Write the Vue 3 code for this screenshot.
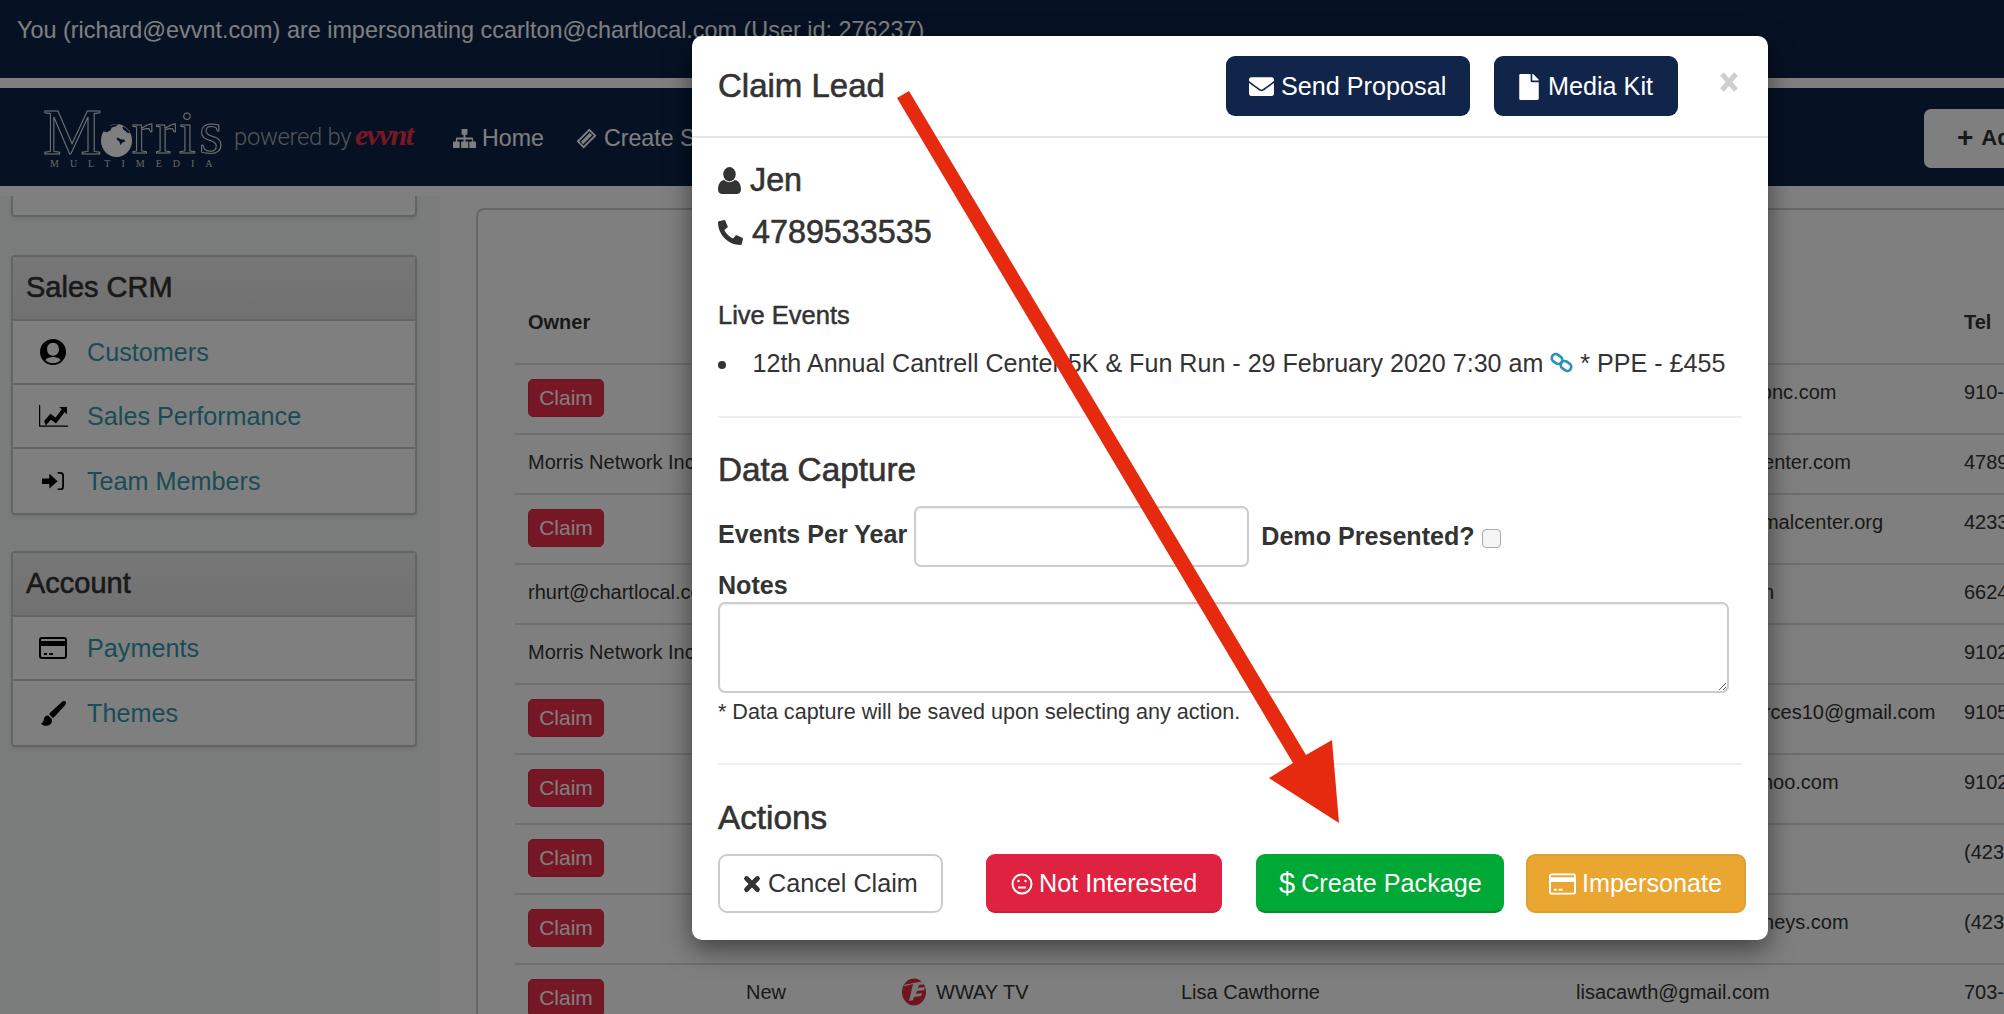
<template>
	<div class="page">
		<div class="impersonate-bar">You (richard@evvnt.com) are impersonating ccarlton@chartlocal.com (User id: 276237)</div>

		<nav class="nav">
			<div class="logo">
				<div class="logo-word">
					<span class="logo-m">M</span>
					<svg class="globe" viewBox="0 0 32 34">
						<ellipse cx="16" cy="17" rx="16" ry="17" fill="#fff" />
						<path d="M9 2c3-1.500 6-2 9-1.500l-3 2-4 1-1 3-4 2-4-1c1-2.500 4-5.500 7-6.500z" fill="#0d2249" />
						<path d="M23 2.500c3 1.500 5.500 4 7 7l-3-.5-2-2-2-1-1-3z" fill="#0d2249" />
						<path d="M17 14l4 2 3 0 1 2-3 1-2 3-1-4-3-2z" fill="#0d2249" />
					</svg>
					<span class="logo-rest">rris</span>
				</div>
				<div class="logo-sub">MULTIMEDIA</div>
			</div>
			<div class="powered">powered by</div>
			<div class="evvnt">evvnt</div>
			<a class="nav-link nav-home">
				<svg class="nav-icon" viewBox="0 0 24 20" fill="currentColor">
					<path d="M9 0h6v6h-2v3h7a1 1 0 0 1 1 1v3h2a1 1 0 0 1 1 1v5a1 1 0 0 1-1 1h-5a1 1 0 0 1-1-1v-5a1 1 0 0 1 1-1h2v-2h-7v2h2a1 1 0 0 1 1 1v5a1 1 0 0 1-1 1H9.500a1 1 0 0 1-1-1v-5a1 1 0 0 1 1-1H11v-2H4.500v2H6a1 1 0 0 1 1 1v5a1 1 0 0 1-1 1H1a1 1 0 0 1-1-1v-5a1 1 0 0 1 1-1h2v-3a1 1 0 0 1 1-1h7V6H9z" />
				</svg>
				Home
			</a>
			<a class="nav-link nav-create">
				<svg class="nav-icon" viewBox="0 0 22 22" fill="none" stroke="currentColor" stroke-width="2">
					<path d="M14 2l6 6-12 12-6-6z" />
					<path d="M14.500 6.500l1 1-8 8-1-1z" fill="currentColor" />
				</svg>
				Create Sale
			</a>
			<a class="nav-add"><span class="plus">+</span> Add New</a>
		</nav>

		<div class="content">
			<aside class="sidebar">
				<div class="panel panel-cut"></div>
				<div v-for="group in menu" :key="group.title" class="panel">
					<div class="panel-head">{{ group.title }}</div>
					<a v-for="item in group.items" :key="item.label" class="panel-row">
						<span class="row-icon">
							<svg :viewBox="item.box" :style="{ width: item.w + 'px' }" fill="#000">
								<path :d="item.d" fill-rule="evenodd" />
							</svg>
						</span>
						{{ item.label }}
					</a>
				</div>
			</aside>

			<main class="main">
				<div class="main-panel">
					<table class="leads">
						<colgroup>
							<col style="width: 218px" />
							<col style="width: 155px" />
							<col style="width: 280px" />
							<col style="width: 395px" />
							<col style="width: 388px" />
							<col style="width: 200px" />
						</colgroup>
						<thead>
							<tr>
								<th>Owner</th>
								<th></th>
								<th></th>
								<th></th>
								<th></th>
								<th>Tel</th>
							</tr>
						</thead>
						<tbody>
							<tr v-for="(row, i) in rows" :key="i">
								<td>
									<button v-if="!row.owner" class="claim">Claim</button>
									<template v-else>{{ row.owner }}</template>
								</td>
								<td>{{ row.status }}</td>
								<td>
									<span v-if="row.company" class="company">
										<svg class="company-logo" viewBox="0 0 26 28">
											<ellipse cx="13" cy="14" rx="12" ry="13.500" fill="#dd2a3c" />
											<path d="M2 7l22-4 1 3-7 1-1 3 7-1-1 3-7 1-1 3 6-1-1 3-7 1-1 3-4 1 4-17-8 2z" fill="#f2f2f2" />
										</svg>
										{{ row.company }}
									</span>
								</td>
								<td>{{ row.name }}</td>
								<td>{{ row.email }}</td>
								<td>{{ row.tel }}</td>
							</tr>
						</tbody>
					</table>
				</div>
			</main>
		</div>

		<div class="backdrop"></div>

		<div class="modal">
			<header class="modal-head">
				<h4 class="modal-title">Claim Lead</h4>
				<button class="btn btn-navy btn-send">
					<svg class="ico-send" viewBox="0 0 512 512" fill="currentColor">
						<path d="M502.300 190.800c3.900-3.100 9.700-.2 9.700 4.700V400c0 26.500-21.500 48-48 48H48c-26.500 0-48-21.500-48-48V195.600c0-5 5.700-7.800 9.700-4.700 22.400 17.400 52.100 39.500 154.100 113.600 21.100 15.400 56.700 47.800 92.200 47.600 35.700.3 72-32.800 92.300-47.600 102-74.100 131.600-96.300 154-113.700zM256 320c23.200.4 56.600-29.200 73.400-41.400 132.700-96.300 142.800-104.700 173.400-128.700 5.800-4.500 9.200-11.500 9.200-18.900v-19c0-26.500-21.500-48-48-48H48C21.500 64 0 85.500 0 112v19c0 7.400 3.400 14.300 9.200 18.900 30.600 23.900 40.700 32.400 173.400 128.700 16.800 12.200 50.200 41.800 73.400 41.400z" />
					</svg>
					Send Proposal
				</button>
				<button class="btn btn-navy btn-kit">
					<svg class="ico-file" viewBox="0 0 384 512" fill="currentColor">
						<path d="M224 136V0H24C10.700 0 0 10.700 0 24v464c0 13.300 10.700 24 24 24h336c13.300 0 24-10.700 24-24V160H248c-13.200 0-24-10.800-24-24zm160-14.100v6.100H256V0h6.100c6.400 0 12.500 2.500 17 7l97.900 98c4.500 4.500 7 10.600 7 16.900z" />
					</svg>
					Media Kit
				</button>
				<svg class="close" viewBox="0 0 20 20" fill="none" stroke="#cfcfcf" stroke-width="5">
					<path d="M3 2l14 16M17 2L3 18" />
				</svg>
			</header>

			<div class="modal-body">
				<div class="contact">
					<svg class="ico-user" viewBox="0 0 24 28" fill="currentColor">
						<ellipse cx="12" cy="7.500" rx="6.500" ry="7.500" />
						<path d="M0 23.500C0 18 2.500 14 6.500 13.500c1.500 1.400 3.400 2.200 5.500 2.200s4-.8 5.500-2.200c4 .5 6.500 4.500 6.500 10 0 2.700-1.700 4.500-4 4.500H4c-2.300 0-4-1.800-4-4.500z" />
					</svg>
					Jen
				</div>
				<div class="contact">
					<svg class="ico-phone" viewBox="0 0 512 512" fill="currentColor">
						<g transform="matrix(-1 0 0 1 512 0)">
							<path d="M493.400 24.600l-104-24c-11.300-2.600-22.900 3.300-27.500 13.900l-48 112c-4.200 9.800-1.400 21.300 6.900 28l60.600 49.600c-36 76.700-98.900 140.500-177.200 177.200l-49.600-60.600c-6.800-8.300-18.200-11.100-28-6.900l-112 48C3.900 366.500-2 378.100.6 389.400l24 104C27.100 504.200 36.700 512 48 512c256.100 0 464-207.500 464-464 0-11.200-7.700-20.900-18.600-23.400z" />
						</g>
					</svg>
					4789533535
				</div>

				<h5 class="live-title">Live Events</h5>
				<ul class="live-list">
					<li>
						12th Annual Cantrell Center 5K &amp; Fun Run - 29 February 2020 7:30 am
						<svg class="ico-link" viewBox="0 0 23 21" fill="none" stroke="#2b93b8" stroke-width="2.700">
							<rect x="1.500" y="3" width="11" height="8" rx="4" transform="rotate(35 7 7)" />
							<rect x="10.500" y="10" width="11" height="8" rx="4" transform="rotate(35 16 14)" />
						</svg>
						* PPE - £455
					</li>
				</ul>

				<hr class="rule rule-one" />

				<h4 class="section-title section-data">Data Capture</h4>
				<div class="capture-row">
					<label class="field-label events-label">Events Per Year</label>
					<input class="events-input" type="text" />
					<label class="field-label demo-label">Demo Presented?</label>
					<input class="demo-check" type="checkbox" />
				</div>
				<label class="field-label notes-label">Notes</label>
				<textarea class="notes"></textarea>
				<p class="capture-note">* Data capture will be saved upon selecting any action.</p>

				<hr class="rule rule-two" />

				<h4 class="section-title section-actions">Actions</h4>
				<div class="actions">
					<button class="btn btn-cancel">
						<svg class="ico-x" viewBox="0 0 20 20" fill="none" stroke="currentColor" stroke-width="5.500" stroke-linecap="round">
							<path d="M4 4l12 12M16 4L4 16" />
						</svg>
						Cancel Claim
					</button>
					<button class="btn btn-red">
						<svg class="ico-meh" viewBox="0 0 22 22" fill="none" stroke="currentColor" stroke-width="2">
							<circle cx="11" cy="11" r="9.500" />
							<path d="M7 14.500h8" />
							<circle cx="7.500" cy="8" r="1.200" fill="currentColor" stroke="none" />
							<circle cx="14.500" cy="8" r="1.200" fill="currentColor" stroke="none" />
						</svg>
						Not Interested
					</button>
					<button class="btn btn-green"><span class="dollar">$</span> Create Package</button>
					<button class="btn btn-amber">
						<svg class="ico-card" viewBox="0 0 28 22" fill="currentColor">
							<path fill-rule="evenodd" d="M3 0h22a3 3 0 0 1 3 3v16a3 3 0 0 1-3 3H3a3 3 0 0 1-3-3V3a3 3 0 0 1 3-3z M2 9v10a1 1 0 0 0 1 1h22a1 1 0 0 0 1-1V9z M2 2.700V4h24V2.700a.7.7 0 0 0-.7-.7H2.700a.7.7 0 0 0-.7.7z M5 16h3v2H5z M10 16h4v2h-4z" />
						</svg>
						Impersonate
					</button>
				</div>
			</div>
		</div>

		<svg class="arrow" viewBox="0 0 2004 1014">
			<polygon points="897,98 909,91 1306,755 1332,740 1339,823 1269,778 1293,763" fill="#e62a10" />
		</svg>
	</div>
</template>

<script setup>
const menu = [
	{
		title: "Sales CRM",
		items: [
			{
				label: "Customers",
				box: "0 0 24 24",
				w: 26,
				d: "M12 0a12 12 0 1 0 0 24a12 12 0 1 0 0-24z M12 3.500c-3.300 0-5.500 2.700-5.500 6s2.200 6 5.500 6 5.500-2.700 5.500-6-2.200-6-5.500-6z M5 19.300c1.600-1.800 4-2.600 7-2.600s5.400.8 7 2.600A10 10 0 0 1 12 22.400a10 10 0 0 1-7-3.100z",
			},
			{
				label: "Sales Performance",
				box: "0 0 28 21",
				w: 29,
				d: "M0 0h1.200v19.800H28V21H0z M5 15.500l6-7 5 3.500 6-8-2.500-2H27v7l-2.200-2.200-8.300 11-5-3.500-5 5.500z",
			},
			{
				label: "Team Members",
				box: "0 0 24 20",
				w: 22,
				d: "M0 7h8V2l9 8-9 8v-5H0z M17 0h3a4 4 0 0 1 4 4v12a4 4 0 0 1-4 4h-3v-2h3a2 2 0 0 0 2-2V4a2 2 0 0 0-2-2h-3z",
			},
		],
	},
	{
		title: "Account",
		items: [
			{
				label: "Payments",
				box: "0 0 28 22",
				w: 28,
				d: "M3 0h22a3 3 0 0 1 3 3v16a3 3 0 0 1-3 3H3a3 3 0 0 1-3-3V3a3 3 0 0 1 3-3z M2 9v10a1 1 0 0 0 1 1h22a1 1 0 0 0 1-1V9z M2 2.700V4h24V2.700a.7.7 0 0 0-.7-.7H2.700a.7.7 0 0 0-.7.7z M5 16h3v2H5z M10 16h4v2h-4z",
			},
			{
				label: "Themes",
				box: "0 0 24 24",
				w: 25,
				d: "M23.500.5c-1-1-2.500-.4-3.500.5L9 11c-.6.5-1 1.200-1 2l3 3c.8 0 1.500-.4 2-1L23 4c.9-1 1.500-2.500.5-3.500z M7 14c-3 0-4 2-4.500 4.500C2.200 20 1.500 21 0 21.500 1.500 23.500 4 24 6.500 23.500c3-.6 4.500-3 4-6z",
			},
		],
	},
];

const rows = [
	{ email: "info@carolinamarathonc.com", tel: "910-" },
	{ owner: "Morris Network Inc", email: "jennifer.pa@cantrellcenter.com", tel: "4789" },
	{ email: "dawn.k@hamiltonanimalcenter.org", tel: "4233" },
	{ owner: "rhurt@chartlocal.com", email: "mail@memphistn.com", tel: "6624" },
	{ owner: "Morris Network Inc", email: "", tel: "9102" },
	{ email: "denorthcarolinaresources10@gmail.com", tel: "9105" },
	{ email: "wilmingtonruns1@yahoo.com", tel: "9102" },
	{ email: "", tel: "(423)" },
	{ email: "info@wilmingtonattorneys.com", tel: "(423)" },
	{ status: "New", company: "WWAY TV", name: "Lisa Cawthorne", email: "lisacawth@gmail.com", tel: "703-" },
];
</script>

<style>
html,
body {
	margin: 0;
	overflow: hidden;
}
</style>

<style scoped>
.page {
	position: relative;
	width: 2004px;
	height: 1014px;
	overflow: hidden;
	background: #fff;
	font-family: "Liberation Sans", Arial, sans-serif;
	color: #333;
}

.impersonate-bar {
	height: 78px;
	box-sizing: border-box;
	padding: 15px 0 0 17px;
	background: #0d2249;
	color: #fff;
	font-size: 23.400px;
	line-height: 30px;
	white-space: nowrap;
}

.nav {
	display: flex;
	align-items: center;
	height: 98px;
	margin-top: 10px;
	padding-left: 43px;
	background: #0d2249;
	color: #fff;
	white-space: nowrap;
}

.logo {
	width: 191px;
	margin-top: 4px;
	flex: none;
}

.logo-word {
	display: flex;
	align-items: flex-end;
	height: 46px;
	font-family: "Liberation Serif", serif;
	line-height: 46px;
	color: #0d2249;
	-webkit-text-stroke: 1px #e6e6e6;
}

.logo-m {
	font-size: 66px;
}

.logo-rest {
	font-size: 62px;
	letter-spacing: 2.900px;
}

.globe {
	width: 31px;
	height: 33px;
	margin: 0 0 -2px -1px;
	flex: none;
}

.logo-sub {
	margin: 3px 0 0 7px;
	font-family: "Liberation Serif", serif;
	font-size: 10px;
	line-height: 11px;
	letter-spacing: 11px;
	color: #ccc;
}

.powered {
	width: 121px;
	flex: none;
	font-family: Roboto, sans-serif;
	font-weight: 300;
	font-size: 23.800px;
	letter-spacing: -0.3px;
	color: #aaa;
}

.evvnt {
	width: 58px;
	flex: none;
	margin-top: -4px;
	font-family: "Liberation Serif", serif;
	font-style: italic;
	font-weight: 700;
	font-size: 30px;
	letter-spacing: -1.500px;
	color: #f0304a;
}

.nav-link {
	display: flex;
	align-items: center;
	margin-top: 2px;
	font-size: 23.200px;
	flex: none;
}

.nav-home {
	margin-left: 40px;
	width: 122px;
}

.nav-create {
	width: 200px;
}

.nav-icon {
	width: 23px;
	height: 21px;
	margin-right: 6px;
}

.nav-add {
	display: flex;
	align-items: center;
	box-sizing: border-box;
	width: 200px;
	height: 59px;
	margin: 2px -120px 0 auto;
	padding-left: 33px;
	border-radius: 7px;
	background: #fff;
	color: #333;
	font-size: 22px;
	font-weight: 700;
}

.plus {
	margin-right: 8px;
	font-size: 28px;
}

.content {
	display: flex;
	align-items: flex-start;
}

.sidebar {
	box-sizing: border-box;
	width: 440px;
	height: 818px;
	margin-top: 10px;
	padding: 0 23px 0 11px;
	flex: none;
	background: #f5f9f9;
}

.panel {
	margin-bottom: 36px;
	border: 2px solid #c6c9c9;
	border-radius: 4px;
	background: #fff;
	box-shadow: 0 2px 4px rgba(0, 0, 0, 0.08);
}

.panel-cut {
	height: 19px;
	margin-bottom: 38px;
	border-top: 0;
	border-radius: 0 0 4px 4px;
}

.panel-head {
	box-sizing: border-box;
	height: 64px;
	padding-left: 13px;
	border-bottom: 2px solid #c6c9c9;
	background: linear-gradient(#eee, #e2e2e2);
	color: #333;
	font-size: 29px;
	line-height: 60px;
	-webkit-text-stroke: 0.6px currentColor;
}

.panel-row {
	display: flex;
	align-items: center;
	box-sizing: border-box;
	height: 64px;
	padding-left: 20px;
	border-bottom: 2px solid #c6c9c9;
	color: #3498b0;
	font-size: 25.200px;
}

.panel-row:last-child {
	border-bottom: 0;
}

.row-icon {
	display: flex;
	justify-content: center;
	width: 40px;
	margin-right: 14px;
	flex: none;
}

.main {
	flex: 1;
	min-width: 0;
	padding: 22px 0 0 36px;
}

.main-panel {
	box-sizing: border-box;
	height: 820px;
	padding: 83px 0 0 37px;
	border: 2px solid #c9d0cf;
	border-right: 0;
	border-radius: 8px 0 0 0;
	background: #fff;
}

.leads {
	width: 1436px;
	table-layout: fixed;
	border-collapse: collapse;
	font-size: 20px;
	line-height: 28px;
	color: #333;
}

.leads th {
	height: 71px;
	box-sizing: border-box;
	padding: 15px 13px 0;
	border-bottom: 2px solid #ddd;
	text-align: left;
	vertical-align: top;
}

.leads td {
	padding: 13px 13px 17px;
	border-bottom: 2px solid #ddd;
	vertical-align: top;
	white-space: nowrap;
}

.claim {
	display: block;
	box-sizing: border-box;
	width: 76px;
	height: 38px;
	margin: 1px 0 -1px;
	padding: 0;
	border: 1px solid #d92a45;
	border-radius: 5px;
	background: #ed2e4b;
	color: #fff;
	font: 21px "Liberation Sans", Arial, sans-serif;
}

.company {
	display: flex;
	align-items: center;
}

.company-logo {
	width: 26px;
	height: 28px;
	margin-right: 9px;
}

.backdrop {
	position: absolute;
	inset: 0;
	background: rgba(0, 0, 0, 0.5);
}

.modal {
	position: absolute;
	left: 692px;
	top: 36px;
	width: 1076px;
	height: 904px;
	border-radius: 10px;
	background: #fff;
	box-shadow: 0 9px 27px rgba(0, 0, 0, 0.5);
}

.modal-head {
	display: flex;
	align-items: center;
	height: 100px;
	box-sizing: content-box;
	padding: 0 26px;
	border-bottom: 2px solid #e5e5e5;
}

.modal-title {
	flex: 1;
	margin: 0 0 1px;
	font-size: 33px;
	font-weight: 400;
	line-height: 40px;
	-webkit-text-stroke: 0.6px currentColor;
}

.btn {
	display: flex;
	align-items: center;
	flex: none;
	box-sizing: border-box;
	height: 60px;
	border: 2px solid transparent;
	border-radius: 9px;
	font: 25.200px "Liberation Sans", Arial, sans-serif;
	white-space: nowrap;
}

.btn-navy {
	padding-top: 2px;
	background: #11244a;
	color: #fff;
}

.btn-send {
	width: 244px;
	padding-left: 21px;
}

.btn-kit {
	width: 184px;
	margin-left: 24px;
	padding-left: 22px;
}

.ico-send {
	width: 25px;
	height: 25px;
	margin-right: 7px;
}

.ico-file {
	width: 22px;
	height: 26px;
	margin-right: 8px;
}

.close {
	width: 20px;
	height: 20px;
	margin: -8px 3px 0 41px;
}

.modal-body {
	padding: 16px 26px 0;
}

.contact {
	display: flex;
	align-items: center;
	height: 52px;
	font-size: 32.300px;
	-webkit-text-stroke: 0.6px currentColor;
}

.ico-user {
	width: 23px;
	height: 27px;
	margin-right: 9px;
}

.ico-phone {
	width: 25px;
	height: 25px;
	margin-right: 9px;
}

.live-title {
	margin: 39px 0 0;
	font-size: 25.500px;
	font-weight: 400;
	line-height: 36px;
	-webkit-text-stroke: 0.5px currentColor;
}

.live-list {
	margin: 12px 0 0;
	padding: 0;
	list-style: none;
	font-size: 25.100px;
	line-height: 36px;
	white-space: nowrap;
}

.live-list li::before {
	content: "";
	display: inline-block;
	width: 8px;
	height: 8px;
	margin: 0 19.500px 3px 0;
	border-radius: 50%;
	background: #333;
}

.ico-link {
	width: 23px;
	height: 21px;
	vertical-align: -1px;
}

.rule {
	height: 2px;
	margin: 0;
	border: 0;
	background: #eee;
}

.rule-one {
	margin-top: 35px;
}

.rule-two {
	margin-top: 37px;
}

.section-title {
	margin: 0;
	font-size: 33.300px;
	font-weight: 400;
	line-height: 40px;
	-webkit-text-stroke: 0.6px currentColor;
}

.section-data {
	margin-top: 32px;
}

.section-actions {
	margin-top: 33px;
}

.capture-row {
	display: flex;
	align-items: center;
	margin-top: 16px;
	height: 61px;
}

.field-label {
	display: block;
	font-size: 25.100px;
	font-weight: 700;
	line-height: 32px;
}

.events-label {
	margin-top: -5px;
}

.events-input {
	box-sizing: border-box;
	width: 335px;
	height: 61px;
	margin-left: 7px;
	border: 2.500px solid #ccc;
	border-radius: 7px;
	box-shadow: inset 0 1px 2px rgba(0, 0, 0, 0.08);
	outline: none;
}

.demo-label {
	margin: -1px 0 0 12px;
}

.demo-check {
	width: 19px;
	height: 19px;
	margin: 4px 0 0 7px;
	appearance: none;
	border: 1.500px solid #aaa;
	border-radius: 4px;
	background: #f5f5f5;
}

.notes-label {
	margin-top: 2px;
}

.notes {
	display: block;
	box-sizing: border-box;
	width: 1011px;
	height: 91px;
	margin-top: 1px;
	border: 2.500px solid #ccc;
	border-radius: 7px;
	box-shadow: inset 0 1px 2px rgba(0, 0, 0, 0.08);
	outline: none;
}

.capture-note {
	margin: 5px 0 0;
	font-size: 21.550px;
	line-height: 28px;
}

.actions {
	display: flex;
	margin-top: 16px;
}

.actions .btn {
	height: 59px;
	padding-bottom: 1px;
}

.btn-cancel {
	width: 225px;
	padding-left: 23px;
	border-color: #ccc;
	background: #fff;
	color: #333;
}

.btn-red {
	width: 236px;
	margin-left: 43px;
	padding-left: 23px;
	border-color: #df2240;
	border-bottom-color: #c91d39;
	background: #df2240;
	color: #fff;
}

.btn-green {
	width: 248px;
	margin-left: 34px;
	padding-left: 21px;
	border-color: #00a935;
	border-bottom-color: #008f2c;
	background: #00a935;
	color: #fff;
}

.btn-amber {
	width: 220px;
	margin-left: 22px;
	padding-left: 21px;
	border-color: #e0a02e;
	background: #e9a631;
	color: #fff;
}

.ico-x {
	width: 18px;
	height: 18px;
	margin-right: 7px;
}

.ico-meh {
	width: 22px;
	height: 22px;
	margin-right: 6px;
}

.ico-card {
	width: 27px;
	height: 22px;
	margin-right: 6px;
}

.dollar {
	margin-right: 6px;
	font-size: 29px;
}

.arrow {
	position: absolute;
	inset: 0;
	width: 2004px;
	height: 1014px;
	pointer-events: none;
}
</style>
